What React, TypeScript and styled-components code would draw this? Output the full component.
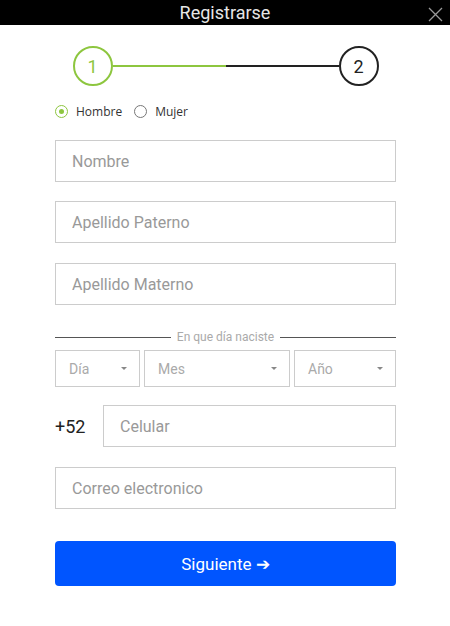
import styled, { createGlobalStyle } from "styled-components";

const GlobalStyle = createGlobalStyle`
  body {
    margin: 0;
    background: #fff;
    font-family: Roboto, "Liberation Sans", sans-serif;
  }
`;

const Header = styled.div`
  position: relative;
  height: 25px;
  background: #000;
  display: flex;
  align-items: center;
  justify-content: center;
  color: #e6e6e6;
  font-size: 18px;
`;

const Close = styled.div`
  position: absolute;
  right: 7px;
  top: 5px;
  width: 15px;
  height: 15px;
`;

const Body = styled.div`
  padding: 0 54px 0 55px;
  display: flex;
  flex-direction: column;
`;

const Stepper = styled.div`
  margin: 21px auto 0;
  width: 306px;
  display: flex;
  align-items: center;
`;

const Step = styled.div<{ $active?: boolean }>`
  width: 36px;
  height: 36px;
  border-radius: 50%;
  border: 2px solid ${(p) => (p.$active ? "#8dc63f" : "#222")};
  color: ${(p) => (p.$active ? "#8dc63f" : "#222")};
  display: flex;
  align-items: center;
  justify-content: center;
  font-size: 18px;
  flex-shrink: 0;
`;

const Line = styled.div<{ $color: string }>`
  flex: 1;
  height: 2px;
  background: ${(p) => p.$color};
`;

const RadioRow = styled.div`
  margin-top: 17px;
  display: flex;
  align-items: center;
  gap: 12px;
  font-family: "Open Sans", sans-serif;
  font-size: 12px;
  color: #333;
`;

const RadioLabel = styled.label`
  display: flex;
  align-items: center;
  gap: 8px;
`;

const Radio = styled.span<{ $checked?: boolean }>`
  width: 11px;
  height: 11px;
  border-radius: 50%;
  border: 1px solid ${(p) => (p.$checked ? "#8dc63f" : "#777")};
  display: flex;
  align-items: center;
  justify-content: center;
  &::after {
    content: "";
    width: 5px;
    height: 5px;
    border-radius: 50%;
    background: ${(p) => (p.$checked ? "#8dc63f" : "transparent")};
  }
`;

const Input = styled.input`
  box-sizing: border-box;
  width: 100%;
  height: 42px;
  border: 1px solid #ccc;
  padding: 0 16px;
  font-family: Roboto, sans-serif;
  font-size: 16px;
  color: #333;
  outline: none;
  &::placeholder {
    color: #999;
  }
`;

const Field = styled.div<{ $top: number }>`
  margin-top: ${(p) => p.$top}px;
  display: flex;
  align-items: center;
`;

const Divider = styled.div`
  margin-top: 25px;
  display: flex;
  align-items: center;
  gap: 6px;
  font-size: 12px;
  color: #aaa;
  &::before,
  &::after {
    content: "";
    flex: 1;
    height: 1px;
    background: #555;
  }
`;

const SelectRow = styled.div`
  margin-top: 6px;
  display: grid;
  grid-template-columns: 85px 146px 1fr;
  gap: 4px;
`;

const Select = styled.div`
  box-sizing: border-box;
  height: 37px;
  border: 1px solid #ccc;
  display: flex;
  align-items: center;
  justify-content: space-between;
  padding: 0 12px 0 13px;
  font-size: 14px;
  color: #aaa;
  &::after {
    content: "";
    border-left: 3px solid transparent;
    border-right: 3px solid transparent;
    border-top: 3px solid #888;
  }
`;

const Prefix = styled.span`
  width: 48px;
  flex-shrink: 0;
  font-size: 18px;
  color: #222;
`;

const Button = styled.button`
  margin-top: 32px;
  height: 45px;
  border: none;
  border-radius: 4px;
  background: #0055ff;
  color: #fff;
  font-family: Roboto, sans-serif;
  font-size: 17px;
`;

export default function App() {
  return (
    <>
      <GlobalStyle />
      <Header>
        Registrarse
        <Close>
          <svg width="15" height="15" viewBox="0 0 15 15">
            <path d="M1 1L14 14M14 1L1 14" stroke="#999" strokeWidth="1.3" />
          </svg>
        </Close>
      </Header>
      <Body>
        <Stepper>
          <Step $active>1</Step>
          <Line $color="#8dc63f" />
          <Line $color="#222" />
          <Step>2</Step>
        </Stepper>
        <RadioRow>
          <RadioLabel>
            <Radio $checked />
            Hombre
          </RadioLabel>
          <RadioLabel>
            <Radio />
            Mujer
          </RadioLabel>
        </RadioRow>
        <Field $top={20}>
          <Input placeholder="Nombre" />
        </Field>
        <Field $top={19}>
          <Input placeholder="Apellido Paterno" />
        </Field>
        <Field $top={20}>
          <Input placeholder="Apellido Materno" />
        </Field>
        <Divider>En que día naciste</Divider>
        <SelectRow>
          <Select>Día</Select>
          <Select>Mes</Select>
          <Select>Año</Select>
        </SelectRow>
        <Field $top={18}>
          <Prefix>+52</Prefix>
          <Input placeholder="Celular" />
        </Field>
        <Field $top={20}>
          <Input placeholder="Correo electronico" />
        </Field>
        <Button>Siguiente ➔</Button>
      </Body>
    </>
  );
}
